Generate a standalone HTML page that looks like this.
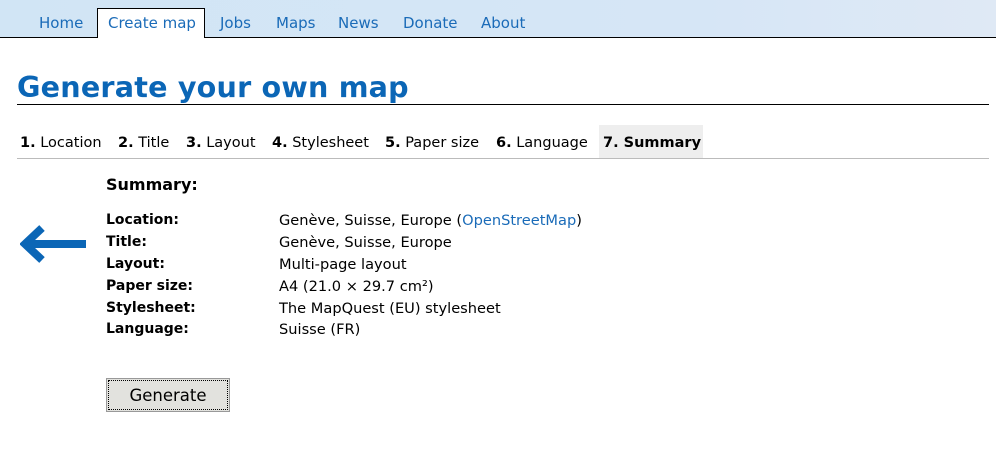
<!DOCTYPE html>
<html><head><meta charset="utf-8"><style>
body{margin:0;width:996px;height:452px;background:#fff;font-family:"DejaVu Sans","Liberation Sans",sans-serif;position:relative;overflow:hidden}
.hdr{position:absolute;left:0;top:0;width:996px;height:37px;background:linear-gradient(90deg,#d1e5f5,#d6e6f6 70%,#dfe9f5);border-bottom:1px solid #000}
.nav a{position:absolute;top:14px;font-size:15px;color:#1a6bb8;text-decoration:none}
.tab{position:absolute;left:97px;top:8px;width:108px;height:30px;background:#fff;border:1px solid #000;border-bottom:none;box-sizing:border-box}
h1{position:absolute;left:17px;top:70px;margin:0;font-size:28.6px;font-weight:bold;color:#0b66b6;letter-spacing:0.2px}
.ul{position:absolute;left:17px;top:104px;width:972px;height:1px;background:#000}
.steps{position:absolute;left:17px;top:125px;height:32px;font-size:14.5px;color:#000}
.steps span{position:absolute;top:10px;white-space:nowrap}
.sel{position:absolute;left:582px;top:0;width:104px;height:33px;background:#eee}
.sl{position:absolute;left:17px;top:158px;width:972px;height:1px;background:#bbb}
.t{position:absolute;font-size:14.6px;white-space:nowrap;color:#000}
.b{font-weight:bold;font-size:14px}
a.l{color:#1a6bb8;text-decoration:none}
.btn{position:absolute;left:106px;top:378px;width:124px;height:34px;box-sizing:border-box;background:#e2e2de;border:1px solid #999;outline:1px dotted #000;outline-offset:-3px;font-size:16.5px;text-align:center;line-height:34px}
</style></head><body>
<div class="hdr"></div>
<div class="tab"></div>
<div class="nav">
<a style="left:39px">Home</a><a style="left:108px">Create map</a><a style="left:220px">Jobs</a><a style="left:276px">Maps</a><a style="left:338px">News</a><a style="left:403px">Donate</a><a style="left:481px">About</a>
</div>
<h1>Generate your own map</h1>
<div class="ul"></div>
<div class="steps"><div class="sel"></div>
<span style="left:3px"><b>1.</b> Location</span>
<span style="left:101px"><b>2.</b> Title</span>
<span style="left:169px"><b>3.</b> Layout</span>
<span style="left:255px"><b>4.</b> Stylesheet</span>
<span style="left:368px"><b>5.</b> Paper size</span>
<span style="left:479px"><b>6.</b> Language</span>
<span style="left:586px"><b>7. Summary</b></span>
</div>
<div class="sl"></div>
<div class="t b" style="left:106px;top:175px;font-size:16px">Summary:</div>
<svg style="position:absolute;left:20px;top:223px" width="68" height="42"><path d="M66 21H8M22 5L5 21L22 37" fill="none" stroke="#0b66b6" stroke-width="8" stroke-linejoin="miter"/></svg>
<div class="t b" style="left:106px;top:212px">Location:</div><div class="t" style="left:279px;top:212px">Genève, Suisse, Europe (<a class="l">OpenStreetMap</a>)</div>
<div class="t b" style="left:106px;top:234px">Title:</div><div class="t" style="left:279px;top:234px">Genève, Suisse, Europe</div>
<div class="t b" style="left:106px;top:256px">Layout:</div><div class="t" style="left:279px;top:256px">Multi-page layout</div>
<div class="t b" style="left:106px;top:278px">Paper size:</div><div class="t" style="left:279px;top:278px">A4 (21.0 × 29.7 cm²)</div>
<div class="t b" style="left:106px;top:300px">Stylesheet:</div><div class="t" style="left:279px;top:300px">The MapQuest (EU) stylesheet</div>
<div class="t b" style="left:106px;top:321px">Language:</div><div class="t" style="left:279px;top:321px">Suisse (FR)</div>
<div class="btn">Generate</div>
</body></html>
